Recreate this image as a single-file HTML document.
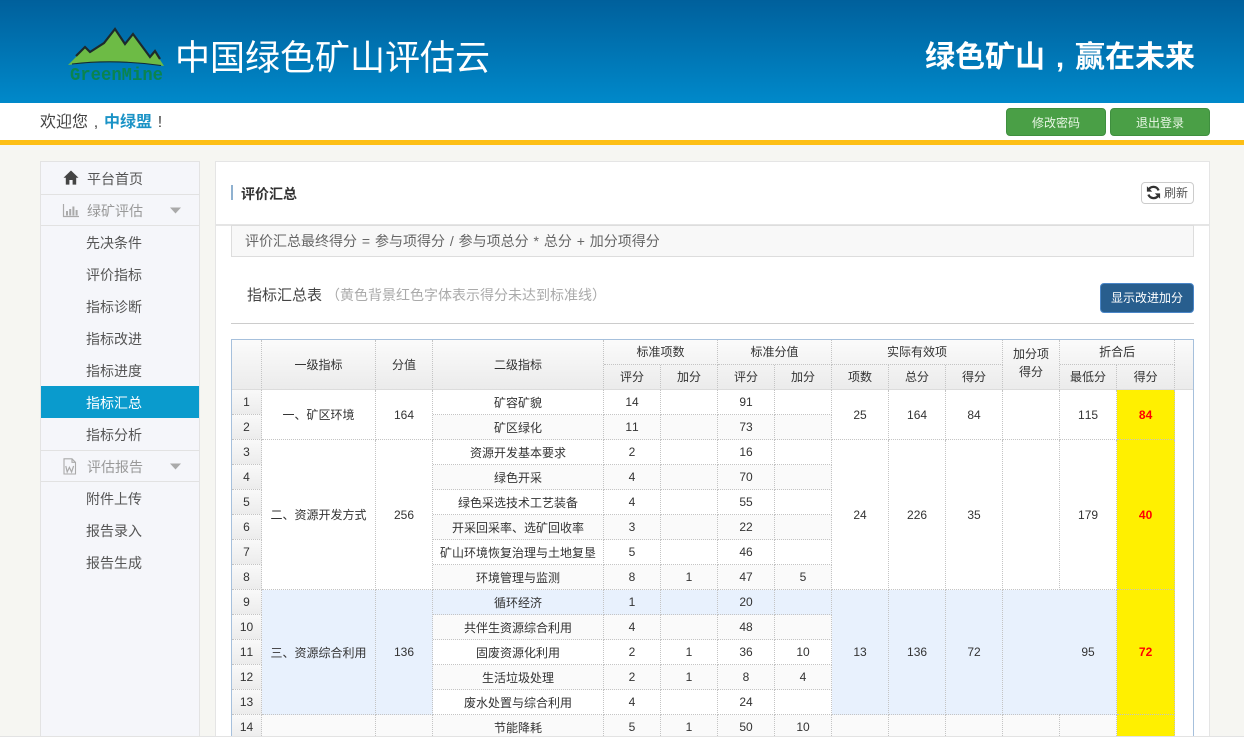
<!DOCTYPE html>
<html lang="zh-CN"><head><meta charset="utf-8"><title>中国绿色矿山评估云</title>
<style>
*{box-sizing:border-box}
html,body{margin:0;padding:0;width:1244px;height:739px;overflow:hidden;background:#fff}
body{font-family:"Liberation Sans","Noto Sans CJK SC",sans-serif;position:relative;color:#333;font-kerning:none}
.a{position:absolute}
.p{display:inline-block;text-align:center}
#hd{left:0;top:0;width:1244px;height:103px;background:linear-gradient(#00609c,#0089ca)}
#bar{left:0;top:103px;width:1244px;height:37px;background:#fff}
#yl{left:0;top:140px;width:1244px;height:5px;background:#fdbf16}
#bg{left:0;top:145px;width:1244px;height:591px;background:#f6f6f2}
.gb{top:108px;width:100px;height:28px;background:#4a9f46;border:1px solid #3f8f3f;border-radius:4px;color:#e8f6e4;font-size:12px;line-height:28px;text-align:center}
#side{left:40px;top:161px;width:160px;height:576px;background:#f5f6fa;border:1px solid #e3e3e3;border-bottom:0}
.it{position:absolute;left:0;width:158px;font-size:14px;color:#555;padding-left:45px}
.t{padding-left:46px}
.hl{position:absolute;left:0;width:158px;height:1px;background:#e2e2e2}
#main{left:215px;top:161px;width:995px;height:576px;background:#fff;border:1px solid #e5e5e5;border-bottom:0}
#tb{left:232px;top:340px;width:961px;height:399px;overflow:hidden;background:#fff}
#tb .g{position:absolute;left:0;top:0;width:961px;height:50px;background:linear-gradient(#fbfbfb,#ebebeb)}
.bl{background:#a6c0dc}
table{position:absolute;left:0;top:0;border-collapse:separate;border-spacing:0;table-layout:fixed;width:961px;font-size:12px;color:#333}
td,th{height:25px;padding:0;border-right:1px dotted #c4c4c4;border-bottom:1px dotted #c4c4c4;text-align:center;font-weight:normal;overflow:hidden;white-space:nowrap}
th{line-height:18px}
tr.l th{border-bottom:1px solid #dcdcdc}
th.l{border-bottom:1px solid #dcdcdc}
th.e,td.e{border-right:0;border-bottom:0;background:transparent}
td.n{background:linear-gradient(#f9f9f9,#ececec)}
tr.s td{background:#fafafa}
tr.s td.n{background:linear-gradient(#f9f9f9,#ececec)}
tr.s td.e,tr.b td.e{background:#fff}
tr.b td{background:#e8f1fd}
tr.b td.n{background:linear-gradient(#f9f9f9,#ececec)}
td.b{background:#e8f1fd!important}
td.y,tr.b td.y,tr.s td.y{background:#fff000;color:#f00;font-weight:bold}
td.w{background:#fff}
</style></head><body>
<div class="a" id="hd"></div>
<svg class="a" style="left:64px;top:22px" width="104" height="62" viewBox="64 22 104 62">
<path d="M68 65 L85 48 L90 53 L104 44 L115 29 L125 45 L133 34 L150 58 L155 52 L164 66 Q115 59 68 65Z" fill="#6dbb45"/>
<path d="M76 56 L85 47 L90 52 L104 43 L115 29 L125 44 L133 34 L150 57 L155 51 L160 59" fill="none" stroke="#1d2a2c" stroke-width="2.2" stroke-linejoin="miter"/>
<path d="M72 64 Q115 59 161 65.5" fill="none" stroke="#10283a" stroke-width="1.1"/>
<text x="70" y="80" font-family="Liberation Mono,monospace" font-size="18" font-weight="bold" fill="#0a8450" textLength="93" lengthAdjust="spacingAndGlyphs">GreenMine</text>
</svg>
<div class="a" style="left:175px;top:34px;font-size:35px;line-height:50px;color:#fff;white-space:nowrap">中国绿色矿山评估云</div>
<div class="a" style="left:925px;top:36px;font-size:30px;line-height:44px;color:#fff;font-weight:bold;white-space:nowrap">绿色矿山<span class="p" style="width:30px">,</span>赢在未来</div>
<div class="a" id="bar"></div>
<div class="a" style="left:40px;top:111px;font-size:16px;line-height:24px;color:#444;white-space:nowrap">欢迎您<span class="p" style="width:16px">,</span><b style="color:#1b93c6">中绿盟</b><span class="p" style="width:16px">!</span></div>
<div class="a gb" style="left:1006px">修改密码</div>
<div class="a gb" style="left:1110px">退出登录</div>
<div class="a" id="yl"></div>
<div class="a" id="bg"></div>

<div class="a" id="side">
<div class="it t" style="top:1px;height:32px;line-height:32px;color:#555">平台首页</div>
<div class="hl" style="top:32px"></div>
<div class="it t" style="top:34px;height:30px;line-height:31px;color:#999">绿矿评估</div>
<div class="hl" style="top:63px"></div>
<div class="it" style="top:65px;height:32px;line-height:32px">先决条件</div>
<div class="it" style="top:97px;height:32px;line-height:32px">评价指标</div>
<div class="it" style="top:129px;height:32px;line-height:32px">指标诊断</div>
<div class="it" style="top:161px;height:32px;line-height:32px">指标改进</div>
<div class="it" style="top:193px;height:32px;line-height:32px">指标进度</div>
<div class="it" style="top:224px;height:32px;line-height:34px;background:#0a9bcd;color:#fff">指标汇总</div>
<div class="it" style="top:257px;height:31px;line-height:32px">指标分析</div>
<div class="hl" style="top:288px"></div>
<div class="it t" style="top:290px;height:29px;line-height:31px;color:#999">评估报告</div>
<div class="hl" style="top:319px"></div>
<div class="it" style="top:321px;height:32px;line-height:32px">附件上传</div>
<div class="it" style="top:353px;height:32px;line-height:32px">报告录入</div>
<div class="it" style="top:385px;height:32px;line-height:32px">报告生成</div>
</div>
<svg class="a" style="left:63px;top:170px" width="16" height="16" viewBox="0 0 16 16"><path d="M8 .5 L15.5 7.8 H13.2 V14.6 H9.6 V10 H6.4 V14.6 H2.8 V7.8 H.5Z" fill="#444"/></svg>
<svg class="a" style="left:62px;top:203px" width="18" height="15" viewBox="0 0 18 15"><path d="M1.5 1 V13.5 H17" fill="none" stroke="#aaa" stroke-width="1.2"/><path d="M4 8h2v4.5H4zM7.2 6h2v6.5h-2zM10.4 3.5h2v9h-2zM13.6 7h2v5.5h-2z" fill="#aaa"/></svg>
<svg class="a" style="left:170px;top:207px" width="12" height="8" viewBox="0 0 12 8"><path d="M0 0.5 H11 L5.5 6.5Z" fill="#aaa"/></svg>
<svg class="a" style="left:62px;top:458px" width="16" height="17" viewBox="0 0 16 17"><path d="M2 .8 H10 L13.5 4.3 V16 H2Z M10 .8 V4.3 H13.5" fill="none" stroke="#aaa" stroke-width="1.1"/><path d="M3.8 8 L5.2 14 L7.4 9.4 L9.6 14 L11.6 8" fill="none" stroke="#aaa" stroke-width="1.2"/></svg>
<svg class="a" style="left:170px;top:463px" width="12" height="8" viewBox="0 0 12 8"><path d="M0 0.5 H11 L5.5 6.5Z" fill="#aaa"/></svg>

<div class="a" id="main"></div>
<div class="a" style="left:216px;top:224px;width:993px;height:2px;background:#e5e5e5"></div>
<div class="a" style="left:231px;top:185px;width:2px;height:15px;background:#8fb1d0"></div>
<div class="a" style="left:241px;top:184px;font-size:14px;line-height:20px;font-weight:bold;color:#333;white-space:nowrap">评价汇总</div>
<div class="a" style="left:1141px;top:182px;width:53px;height:22px;border:1px solid #ccc;border-radius:4px;background:#fff;font-size:12px;line-height:21px;color:#555;padding-left:22px;white-space:nowrap">刷新</div>
<svg class="a" style="left:1146px;top:185px" width="15" height="15" viewBox="0 0 15 15"><path d="M12.6 5.4 A5.6 5.6 0 0 0 2.6 4.6" fill="none" stroke="#333" stroke-width="2.3"/><path d="M.9 1.3 V6.6 H6.2Z" fill="#333"/><path d="M2.4 9.6 A5.6 5.6 0 0 0 12.4 10.4" fill="none" stroke="#333" stroke-width="2.3"/><path d="M14.1 13.7 V8.4 H8.8Z" fill="#333"/></svg>
<div class="a" style="left:231px;top:225px;width:963px;height:32px;background:#f8f8f8;border:1px solid #ddd;font-size:14px;line-height:31px;color:#666;padding-left:13px;white-space:nowrap;word-spacing:1px">评价汇总最终得分 = 参与项得分 / 参与项总分 * 总分 + 加分项得分</div>
<div class="a" style="left:247px;top:285px;font-size:15px;line-height:22px;color:#444;white-space:nowrap">指标汇总表</div>
<div class="a" style="left:326px;top:285px;font-size:14px;line-height:20px;color:#aaa;white-space:nowrap">（黄色背景红色字体表示得分未达到标准线）</div>
<div class="a" style="left:1100px;top:283px;width:94px;height:30px;background:#285e8e;border:1px solid #4a86c8;border-radius:4px;color:#fff;font-size:12px;line-height:29px;text-align:center;white-space:nowrap">显示改进加分</div>
<div class="a" style="left:231px;top:323px;width:963px;height:1px;background:#ccc"></div>

<div class="a" id="tb"><div class="g"></div>
<table>
<colgroup><col style="width:30px"><col style="width:114px"><col style="width:57px"><col style="width:171px"><col style="width:57px"><col style="width:57px"><col style="width:57px"><col style="width:57px"><col style="width:57px"><col style="width:57px"><col style="width:57px"><col style="width:57px"><col style="width:57px"><col style="width:58px"><col style="width:18px"></colgroup>
<tr><th rowspan="2" class="l"></th><th rowspan="2" class="l">一级指标</th><th rowspan="2" class="l">分值</th><th rowspan="2" class="l">二级指标</th><th colspan="2">标准项数</th><th colspan="2">标准分值</th><th colspan="3">实际有效项</th><th rowspan="2" class="l" style="padding-bottom:4px">加分项<br>得分</th><th colspan="2">折合后</th><th rowspan="2" class="l" style="border-right:0"></th></tr>
<tr class="l"><th>评分</th><th>加分</th><th>评分</th><th>加分</th><th>项数</th><th>总分</th><th>得分</th><th>最低分</th><th>得分</th></tr>

<tr><td class="n">1</td><td rowspan="2" class="w">一、矿区环境</td><td rowspan="2" class="w">164</td><td>矿容矿貌</td><td>14</td><td></td><td>91</td><td></td><td rowspan="2" class="w">25</td><td rowspan="2" class="w">164</td><td rowspan="2" class="w">84</td><td rowspan="2" class="w"></td><td rowspan="2" class="w">115</td><td rowspan="2" class="y">84</td><td class="e"></td></tr>
<tr class="s"><td class="n">2</td><td>矿区绿化</td><td>11</td><td></td><td>73</td><td></td><td class="e"></td></tr>

<tr><td class="n">3</td><td rowspan="6" class="w">二、资源开发方式</td><td rowspan="6" class="w">256</td><td>资源开发基本要求</td><td>2</td><td></td><td>16</td><td></td><td rowspan="6" class="w">24</td><td rowspan="6" class="w">226</td><td rowspan="6" class="w">35</td><td rowspan="6" class="w"></td><td rowspan="6" class="w">179</td><td rowspan="6" class="y">40</td><td class="e"></td></tr>
<tr class="s"><td class="n">4</td><td>绿色开采</td><td>4</td><td></td><td>70</td><td></td><td class="e"></td></tr>
<tr><td class="n">5</td><td>绿色采选技术工艺装备</td><td>4</td><td></td><td>55</td><td></td><td class="e"></td></tr>
<tr class="s"><td class="n">6</td><td>开采回采率、选矿回收率</td><td>3</td><td></td><td>22</td><td></td><td class="e"></td></tr>
<tr><td class="n">7</td><td>矿山环境恢复治理与土地复垦</td><td>5</td><td></td><td>46</td><td></td><td class="e"></td></tr>
<tr class="s"><td class="n">8</td><td>环境管理与监测</td><td>8</td><td>1</td><td>47</td><td>5</td><td class="e"></td></tr>

<tr class="b"><td class="n">9</td><td rowspan="5" class="b">三、资源综合利用</td><td rowspan="5" class="b">136</td><td>循环经济</td><td>1</td><td></td><td>20</td><td></td><td rowspan="5" class="b">13</td><td rowspan="5" class="b">136</td><td rowspan="5" class="b">72</td><td rowspan="5" class="b" style="border-right:0"></td><td rowspan="5" class="b">95</td><td rowspan="5" class="y">72</td><td class="e"></td></tr>
<tr class="s"><td class="n">10</td><td>共伴生资源综合利用</td><td>4</td><td></td><td>48</td><td></td><td class="e"></td></tr>
<tr><td class="n">11</td><td>固废资源化利用</td><td>2</td><td>1</td><td>36</td><td>10</td><td class="e"></td></tr>
<tr class="s"><td class="n">12</td><td>生活垃圾处理</td><td>2</td><td>1</td><td>8</td><td>4</td><td class="e"></td></tr>
<tr><td class="n">13</td><td>废水处置与综合利用</td><td>4</td><td></td><td>24</td><td></td><td class="e"></td></tr>

<tr class="s"><td class="n">14</td><td></td><td></td><td>节能降耗</td><td>5</td><td>1</td><td>50</td><td>10</td><td></td><td></td><td></td><td></td><td></td><td class="y"></td><td class="e"></td></tr>
</table></div>
<div class="a bl" style="left:231px;top:339px;width:963px;height:1px"></div>
<div class="a bl" style="left:231px;top:339px;width:1px;height:400px"></div>
<div class="a bl" style="left:1193px;top:339px;width:1px;height:400px"></div>
<div class="a" style="left:0;top:736px;width:1244px;height:3px;background:#fff;border-top:1px solid #e3e3e3"></div>
</body></html>
